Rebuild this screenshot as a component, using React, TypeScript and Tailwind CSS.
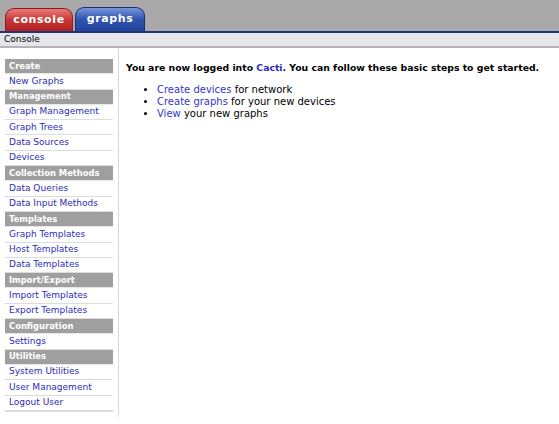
import React from 'react';

type Row = { label: string; header?: boolean };

const menu: Row[] = [
  { label: 'Create', header: true },
  { label: 'New Graphs' },
  { label: 'Management', header: true },
  { label: 'Graph Management' },
  { label: 'Graph Trees' },
  { label: 'Data Sources' },
  { label: 'Devices' },
  { label: 'Collection Methods', header: true },
  { label: 'Data Queries' },
  { label: 'Data Input Methods' },
  { label: 'Templates', header: true },
  { label: 'Graph Templates' },
  { label: 'Host Templates' },
  { label: 'Data Templates' },
  { label: 'Import/Export', header: true },
  { label: 'Import Templates' },
  { label: 'Export Templates' },
  { label: 'Configuration', header: true },
  { label: 'Settings' },
  { label: 'Utilities', header: true },
  { label: 'System Utilities' },
  { label: 'User Management' },
  { label: 'Logout User' },
];

const font = "font-['Verdana','DejaVu_Sans',sans-serif]";

export default function App() {
  return (
    <div className={`w-[559px] h-[424px] bg-white overflow-hidden ${font}`}>
      {/* Tab bar */}
      <div className="h-[31px] bg-[#a9a9a9] flex items-end pl-[5px] gap-[2px]">
        <div className="h-[23px] w-[68px] rounded-t-[9px] border border-[#8e1c1c] border-b-0 bg-gradient-to-b from-[#e87a7a] via-[#c83434] to-[#b22222] flex items-center justify-center">
          <span className="text-white font-bold text-[11px] tracking-[0.6px]">console</span>
        </div>
        <div className="h-[24px] w-[70px] rounded-t-[9px] border border-[#1b2f73] border-b-0 bg-gradient-to-b from-[#7a95d8] via-[#2f53ad] to-[#24449a] flex items-center justify-center">
          <span className="text-white font-bold text-[11px] tracking-[0.6px]">graphs</span>
        </div>
      </div>
      <div className="h-[2px] bg-[#1f3579]" />
      {/* Breadcrumb */}
      <div className="h-[15px] bg-[#e6e6ea] border-b-2 border-[#b4b4b4] flex items-center pl-[4px]">
        <span className="text-[9px] text-black">Console</span>
      </div>

      <div className="flex">
        {/* Sidebar */}
        <div className="w-[119px] h-[369px] border-r border-[#d8d8d8] pt-[11px] px-[5px] pb-[8px]">
          <div className="border-b border-[#dcdcdc]">
            {menu.map((r) =>
              r.header ? (
                <div
                  key={r.label}
                  className="h-[15.3px] bg-[#9f9f9f] border-b border-[#e8e8e8] flex items-center pl-[4px] text-white font-bold text-[8.4px]"
                >
                  {r.label}
                </div>
              ) : (
                <div
                  key={r.label}
                  className="h-[15.3px] border-b border-[#dcdcdc] flex items-center pl-[4px] text-[#2c2cba] text-[9px]"
                >
                  {r.label}
                </div>
              )
            )}
          </div>
        </div>

        {/* Main */}
        <div className="flex-1 pl-[7px] pt-[14px]">
          <p className="text-[9.3px] font-bold text-black leading-[12px]">
            You are now logged into <span className="text-[#2c2cba]">Cacti</span>. You can follow these basic steps to get started.
          </p>
          <ul className="mt-[10px] pl-[31px] list-disc text-[10px] leading-[12px] text-black">
            <li>
              <span className="text-[#3636cc]">Create devices</span> for network
            </li>
            <li>
              <span className="text-[#3636cc]">Create graphs</span> for your new devices
            </li>
            <li>
              <span className="text-[#3636cc]">View</span> your new graphs
            </li>
          </ul>
        </div>
      </div>
    </div>
  );
}
